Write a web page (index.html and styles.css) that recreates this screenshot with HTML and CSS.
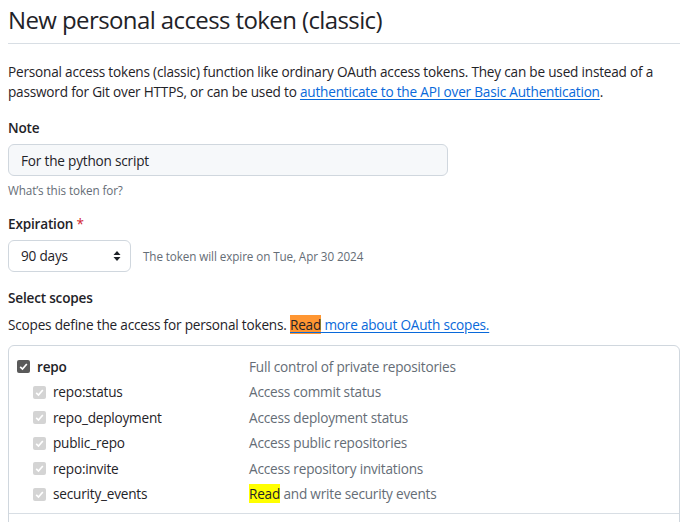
FILE: index.html
```html
<!DOCTYPE html>
<html lang="en">
<head>
<meta charset="utf-8">
<title>New personal access token (classic)</title>
<link rel="stylesheet" href="styles.css">
</head>
<body>
<main class="page">
  <div class="subhead">
    <h1 class="subhead-title">New personal access token (classic)</h1>
  </div>
  <p class="intro">Personal access tokens (classic) function like ordinary OAuth access tokens. They can be used instead of a password for Git over HTTPS, or can be used to <a href="#" class="link">authenticate to the API over Basic Authentication</a>.</p>

  <div class="field">
    <label class="label" for="note">Note</label>
    <input class="input" id="note" type="text" value="For the python script">
    <p class="note">What’s this token for?</p>
  </div>

  <div class="field field-exp">
    <label class="label">Expiration <span class="req">*</span></label>
    <div class="exp-row">
      <div class="select">
        <span>90 days</span>
        <svg class="caret" width="8" height="12" viewBox="0 0 8 12"><path d="M4 1 L7.5 5 H0.5 Z M4 11 L7.5 7 H0.5 Z" fill="#1f2328"/></svg>
      </div>
      <span class="exp-note">The token will expire on Tue, Apr 30 2024</span>
    </div>
  </div>

  <div class="field field-scopes">
    <div class="label">Select scopes</div>
    <p class="scopes-desc">Scopes define the access for personal tokens. <a href="#" class="link"><mark class="hl-active">Read</mark> more about OAuth scopes.</a></p>
  </div>

  <div class="scopes-box">
    <div class="scope-group">
      <div class="scope-row">
        <span class="cb cb-on"><svg width="9" height="9" viewBox="0 0 9 9"><path d="M1.2 4.8 L3.5 7 L7.8 2" fill="none" stroke="#fff" stroke-width="1.7"/></svg></span>
        <span class="scope-name strong">repo</span>
        <span class="scope-desc">Full control of private repositories</span>
      </div>
      <div class="scope-row sub">
        <span class="cb cb-dis"><svg width="9" height="9" viewBox="0 0 9 9"><path d="M1.2 4.8 L3.5 7 L7.8 2" fill="none" stroke="#fff" stroke-width="1.7"/></svg></span>
        <span class="scope-name">repo:status</span>
        <span class="scope-desc">Access commit status</span>
      </div>
      <div class="scope-row sub">
        <span class="cb cb-dis"><svg width="9" height="9" viewBox="0 0 9 9"><path d="M1.2 4.8 L3.5 7 L7.8 2" fill="none" stroke="#fff" stroke-width="1.7"/></svg></span>
        <span class="scope-name">repo_deployment</span>
        <span class="scope-desc">Access deployment status</span>
      </div>
      <div class="scope-row sub">
        <span class="cb cb-dis"><svg width="9" height="9" viewBox="0 0 9 9"><path d="M1.2 4.8 L3.5 7 L7.8 2" fill="none" stroke="#fff" stroke-width="1.7"/></svg></span>
        <span class="scope-name">public_repo</span>
        <span class="scope-desc">Access public repositories</span>
      </div>
      <div class="scope-row sub">
        <span class="cb cb-dis"><svg width="9" height="9" viewBox="0 0 9 9"><path d="M1.2 4.8 L3.5 7 L7.8 2" fill="none" stroke="#fff" stroke-width="1.7"/></svg></span>
        <span class="scope-name">repo:invite</span>
        <span class="scope-desc">Access repository invitations</span>
      </div>
      <div class="scope-row sub">
        <span class="cb cb-dis"><svg width="9" height="9" viewBox="0 0 9 9"><path d="M1.2 4.8 L3.5 7 L7.8 2" fill="none" stroke="#fff" stroke-width="1.7"/></svg></span>
        <span class="scope-name">security_events</span>
        <span class="scope-desc"><mark class="hl">Read</mark> and write security events</span>
      </div>
    </div>
    <div class="scope-group scope-group-next"></div>
  </div>
</main>
</body>
</html>
```
FILE: styles.css
```css
* { box-sizing: border-box; }
html, body { margin: 0; padding: 0; background: #fff; }
body {
  font-family: "Open Sans", "Noto Sans", sans-serif;
  font-size: 13.6px;
  line-height: 20px;
  color: #1f2328;
  letter-spacing: -0.2px;
}
.page { width: 687px; padding: 0 7px 0 8px; overflow: hidden; height: 522px; }
.subhead {
  padding-top: 5px;
  padding-bottom: 8px;
  border-bottom: 1px solid #d8dee4;
}
.subhead-title {
  margin: 0;
  font-size: 24px;
  line-height: 30px;
  font-weight: 400;
  letter-spacing: -0.6px;
}
.intro { margin: 18px 0 0; }
.link { color: #0969da; text-decoration: underline; text-underline-offset: 2px; }
.field { margin-top: 16px; }
.label { display: block; font-weight: 600; line-height: 20px; }
.input {
  display: block;
  margin-top: 6px;
  width: 440px;
  height: 32px;
  padding: 0 12px;
  font: inherit;
  letter-spacing: inherit;
  color: #1f2328;
  background: #f6f8fa;
  border: 1px solid #d0d7de;
  border-radius: 6px;
}
.note { margin: 5px 0 0; font-size: 11.7px; line-height: 18px; color: #656d76; letter-spacing: -0.1px; }
.field-exp { margin-top: 15px; }
.req { color: #d1242f; font-weight: 400; }
.exp-row { display: flex; align-items: center; gap: 12px; margin-top: 6px; }
.select {
  display: flex;
  align-items: center;
  justify-content: space-between;
  width: 123px;
  height: 32px;
  padding: 0 9px 0 12px;
  border: 1px solid #d0d7de;
  border-radius: 6px;
  background: #fff;
}
.caret { display: block; }
.exp-note { font-size: 11.7px; color: #656d76; letter-spacing: -0.1px; }
.field-scopes { margin-top: 16px; }
.scopes-desc { margin: 7px 0 0; }
.hl-active { background: #ff9632; color: #1f2328; }
.hl { background: #ffff00; color: #1f2328; }
.scopes-box {
  margin-top: 10px;
  border: 1px solid #d0d7de;
  border-radius: 6px;
}
.scope-group { padding: 8px 0 6px 8px; }
.scope-group + .scope-group { border-top: 1px solid #d8dee4; }
.scope-group-next { height: 40px; }
.scope-row {
  display: grid;
  grid-template-columns: 20px 212px 1fr;
  align-items: center;
  height: 25.5px;
}
.scope-row.sub { grid-template-columns: 36px 196px 1fr; }
.scope-row.sub .cb { justify-self: end; margin-right: 7px; }
.cb {
  width: 13px;
  height: 13px;
  border-radius: 2px;
  display: flex;
  align-items: center;
  justify-content: center;
}
.cb-on { background: #5a5a5a; }
.cb-dis { background: #d4d4d4; }
.scope-name.strong { font-weight: 600; }
.scope-desc { color: #656d76; }
```
